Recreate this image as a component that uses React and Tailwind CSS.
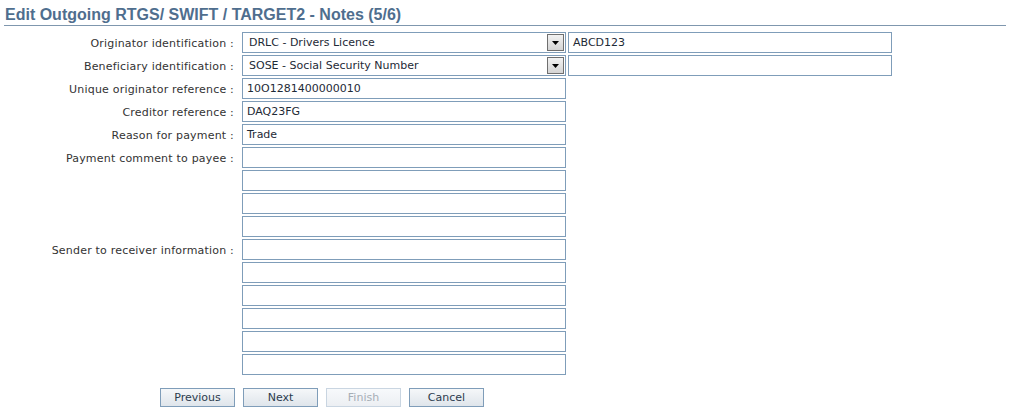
import React from "react";

const inputCls =
  "h-[21px] w-[324px] border border-[#7f9db9] bg-white px-[4px] text-[11px] leading-[19px] text-[#1e2a36] flex items-center";

function Box({ value = "", className = "" }) {
  return <div className={`${inputCls} ${className}`}>{value}</div>;
}

function Select({ value }) {
  return (
    <div className="relative h-[21px] w-[324px] border border-[#7f9db9] bg-white pl-[6px] text-[11px] leading-[19px] text-[#1e2a36] flex items-center">
      {value}
      <div className="absolute right-[1px] top-[1px] h-[17px] w-[17px] border border-[#6f6f6f] bg-gradient-to-b from-[#f2f2f2] to-[#d4d4d4] flex items-center justify-center">
        <svg width="7" height="4" viewBox="0 0 7 4">
          <path d="M0 0 H7 L3.5 4 Z" fill="#000" />
        </svg>
      </div>
    </div>
  );
}

function Row({ label, children }) {
  return (
    <div className="flex items-start">
      <div className="h-[21px] w-[242px] shrink-0 pr-[8px] pt-[2px] text-right text-[11px] leading-[19px] tracking-[0.2px] text-[#333]">
        {label}
      </div>
      <div className="flex flex-col gap-[2px]">{children}</div>
    </div>
  );
}

function Btn({ children, disabled }) {
  return (
    <div
      className={
        disabled
          ? "h-[19px] w-[75px] border border-[#c9d5e1] bg-gradient-to-b from-[#f7f9fb] to-[#eceff3] text-[11px] leading-[17px] text-center text-[#a6aeb6]"
          : "h-[19px] w-[75px] border border-[#7f9db9] bg-gradient-to-b from-[#f5f7f9] to-[#dfe5eb] text-[11px] leading-[17px] text-center text-[#2b3b4d]"
      }
    >
      {children}
    </div>
  );
}

export default function App() {
  return (
    <div className="w-[1013px] h-[415px] bg-white font-['DejaVu_Sans',Verdana,sans-serif]">
      <div className="pl-[4px] pr-[7px]">
        <h1 className="h-[26px] border-b border-[#7f97ae] pt-[5px] pl-[1px] text-[16px] font-bold leading-[19px] text-[#4f6e8e] font-['Liberation_Sans',Arial,sans-serif]">
          Edit Outgoing RTGS/ SWIFT / TARGET2 - Notes (5/6)
        </h1>
      </div>
      <div className="mt-[6px] flex flex-col gap-[2px]">
        <Row label="Originator identification :">
          <div className="flex gap-[2px]">
            <Select value="DRLC - Drivers Licence" />
            <Box value="ABCD123" />
          </div>
        </Row>
        <Row label="Beneficiary identification :">
          <div className="flex gap-[2px]">
            <Select value="SOSE - Social Security Number" />
            <Box />
          </div>
        </Row>
        <Row label="Unique originator reference :">
          <Box value="10O1281400000010" />
        </Row>
        <Row label="Creditor reference :">
          <Box value="DAQ23FG" />
        </Row>
        <Row label="Reason for payment :">
          <Box value="Trade" />
        </Row>
        <Row label="Payment comment to payee :">
          <Box />
          <Box />
          <Box />
          <Box />
        </Row>
        <Row label="Sender to receiver information :">
          <Box />
          <Box />
          <Box />
          <Box />
          <Box />
          <Box />
        </Row>
      </div>
      <div className="mt-[13px] ml-[160px] flex gap-[8px]">
        <Btn>Previous</Btn>
        <Btn>Next</Btn>
        <Btn disabled>Finish</Btn>
        <Btn>Cancel</Btn>
      </div>
    </div>
  );
}
